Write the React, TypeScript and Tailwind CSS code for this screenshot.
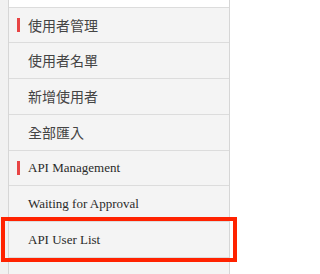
import React from "react";

const zh = { fontFamily: '"Noto Sans CJK TC", "Noto Sans", sans-serif' };
const en = { fontFamily: '"Liberation Serif", "Noto Sans CJK TC", serif' };

function Header({ label, latin, h }: { label: string; latin?: boolean; h: string }) {
  return (
    <div className={`${h} flex items-center border-b border-[#dcdcdc] bg-[#f4f4f4]`}>
      <div className="ml-[8px] h-[14px] w-[3px] bg-[#e84545]" />
      <span
        className={`ml-[8px] ${latin ? "text-[13px] text-[#2a2a2a]" : "text-[14px] text-[#444]"}`}
        style={latin ? en : zh}
      >
        {label}
      </span>
    </div>
  );
}

function Item({ label, latin, h }: { label: string; latin?: boolean; h: string }) {
  return (
    <div className={`${h} flex items-center border-b border-[#dcdcdc] bg-[#f4f4f4] pl-[19px]`}>
      <span
        className={latin ? "text-[13px] text-[#2a2a2a]" : "text-[14px] text-[#444]"}
        style={latin ? en : zh}
      >
        {label}
      </span>
    </div>
  );
}

export default function App() {
  return (
    <div className="relative flex h-[274px] w-[241px] overflow-hidden bg-white">
      <div className="w-[8px] shrink-0 bg-[#f1f1f1]" />
      <div className="flex w-[222px] shrink-0 flex-col border-x border-[#d6d6d6] bg-[#f4f4f4]">
        <div className="h-[8px] shrink-0 border-b border-[#dcdcdc] bg-white" />
        <Header label="使用者管理" h="h-[35px]" />
        <Item label="使用者名單" h="h-[36px]" />
        <Item label="新增使用者" h="h-[36px]" />
        <Item label="全部匯入" h="h-[36px]" />
        <Header label="API Management" latin h="h-[35px]" />
        <Item label="Waiting for Approval" latin h="h-[36px]" />
        <Item label="API User List" latin h="h-[36px]" />
        <div className="flex-1" />
      </div>
      <div className="flex-1 bg-white" />
      <div className="pointer-events-none absolute left-[1px] top-[217px] h-[45px] w-[236px] border-4 border-[#ff2200]" />
    </div>
  );
}
